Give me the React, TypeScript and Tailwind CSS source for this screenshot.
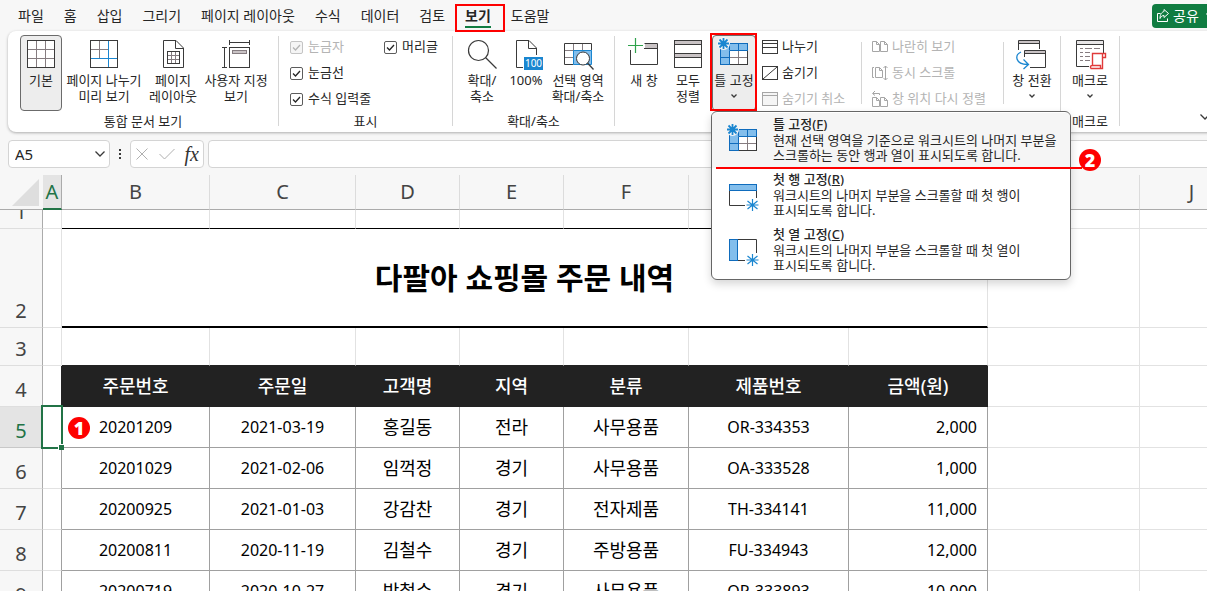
import type { ReactNode } from 'react';

const tabs = ['파일', '홈', '삽입', '그리기', '페이지 레이아웃', '수식', '데이터', '검토', '보기', '도움말'];

const columns = [
  { name: 'A', width: 'w-[19px]' },
  { name: 'B', width: 'w-[148px]' },
  { name: 'C', width: 'w-[146px]' },
  { name: 'D', width: 'w-[104px]' },
  { name: 'E', width: 'w-[104px]' },
  { name: 'F', width: 'w-[125px]' },
  { name: 'G', width: 'w-[160px]' },
  { name: 'H', width: 'w-[139px]' },
  { name: 'I', width: 'w-[152px]' },
  { name: 'J', width: 'w-[104px]' },
];

const headings = ['주문번호', '주문일', '고객명', '지역', '분류', '제품번호', '금액(원)'];

const orders = [
  { row: 5, id: '20201209', date: '2021-03-19', customer: '홍길동', region: '전라', category: '사무용품', product: 'OR-334353', amount: '2,000' },
  { row: 6, id: '20201029', date: '2021-02-06', customer: '임꺽정', region: '경기', category: '사무용품', product: 'OA-333528', amount: '1,000' },
  { row: 7, id: '20200925', date: '2021-01-03', customer: '강감찬', region: '경기', category: '전자제품', product: 'TH-334141', amount: '11,000' },
  { row: 8, id: '20200811', date: '2020-11-19', customer: '김철수', region: '경기', category: '주방용품', product: 'FU-334943', amount: '12,000' },
  { row: 9, id: '20200719', date: '2020-10-27', customer: '박철수', region: '경기', category: '사무용품', product: 'OR-333893', amount: '10,000' },
];

const DARK = '#3a3a3a';
const GRAY = '#857c80';
const FILL = '#c9c3c5';
const BLUE = '#1a86d0';
const SKY = '#83beec';

const Icon: React.FC<{ w?: number; h?: number; color?: string; children: ReactNode }> = ({
  w = 28,
  h = 28,
  color = DARK,
  children,
}) => (
  <svg
    width={w}
    height={h}
    viewBox={`0 0 ${w} ${h}`}
    fill="none"
    stroke={color}
    className="shrink-0 overflow-visible"
    aria-hidden="true"
  >
    {children}
  </svg>
);

const Chevron: React.FC<{ w?: number; color?: string }> = ({ w = 6, color }) => (
  <Icon w={w} h={w / 2 + 1} color={color}>
    <path d={`M.5 .5L${w / 2} ${w / 2}L${w - 0.5} .5`} strokeWidth="1.3" />
  </Icon>
);

const NormalIcon = () => (
  <Icon>
    <rect x=".5" y=".5" width="27" height="27" fill="#fff" />
    <path d="M9.5 1V27M18.5 1V27M1 9.5H27M1 18.5H27" stroke={GRAY} />
  </Icon>
);

const PageBreakIcon = () => (
  <Icon>
    <path d="M9.5 1V18M1 9.5H18" stroke={GRAY} />
    <rect x=".5" y=".5" width="27" height="27" />
    <path d="M18.5 1V27M1 18.5H27" stroke={BLUE} />
  </Icon>
);

const PageLayoutIcon = () => (
  <Icon w={21}>
    <path d="M.5 .5H13L20.5 8V27.5H.5Z" />
    <path d="M12.5 .5V8.5H20.5" />
    <path d="M8.5 11.5V23.5M12.5 11.5V23.5M4.5 15.5H16.5M4.5 19.5H16.5" stroke={GRAY} />
    <rect x="4.5" y="11.5" width="12" height="12" />
  </Icon>
);

const CustomViewIcon = () => (
  <Icon>
    <path d="M7.5 0V5M27.5 0V5M7.5 2.5H27.5M0 7.5H5M0 27.5H5M2.5 7.5V27.5" />
    <rect x="7.5" y="7.5" width="20" height="20" />
    <rect x="10.5" y="10.5" width="14" height="3" fill={FILL} stroke={GRAY} />
  </Icon>
);

const ZoomIcon = () => (
  <Icon>
    <circle cx="10.5" cy="10.5" r="10" strokeWidth="1.2" />
    <path d="M17.5 17.5L28.5 28.5" strokeWidth="1.3" />
  </Icon>
);

const HundredIcon = () => (
  <Icon w={21}>
    <path d="M.5 27.5V.5H13L20.5 8V15M.5 27.5H7" />
    <path d="M12.5 .5V8.5H20.5" />
    <rect x="8" y="17" width="19" height="13" fill={BLUE} stroke="none" />
    <text x="17.5" y="27" textAnchor="middle" fontSize="10" fill="#fff" stroke="none">
      100
    </text>
  </Icon>
);

const ZoomSelectionIcon = () => (
  <Icon>
    <path d="M9.5 4V24M18.5 4V10M1 10.5H10M1 17.5H10" stroke={GRAY} />
    <rect x="10" y="10" width="18" height="14" fill={SKY} stroke="none" />
    <path d="M27.5 10V3.5H.5V24.5H9.5" />
    <path d="M9.5 24.5V10.5H27.5V24.5H9.5" stroke={BLUE} />
    <circle cx="19" cy="18.5" r="6.5" fill="#fff" />
    <path d="M23.5 23L29.5 29.5" strokeWidth="1.3" />
  </Icon>
);

const NewWindowIcon = () => (
  <Icon>
    <rect x="15" y="4" width="12" height="4" fill={FILL} stroke="none" />
    <path d="M.5 10V24.5H27.5V3.5H14.5M14 8.5H27" />
    <path d="M5.5 -2V13M-2 5.5H13" stroke="#2fa24c" strokeWidth="1.2" />
  </Icon>
);

const ArrangeIcon = () => (
  <Icon>
    <rect x=".5" y=".5" width="27" height="4" fill={FILL} />
    <rect x=".5" y="13.5" width="27" height="4" fill={FILL} />
    <rect x=".5" y=".5" width="27" height="27" />
  </Icon>
);

const Star: React.FC<{ x: number; y: number }> = ({ x, y }) => (
  <path
    transform={`translate(${x} ${y})`}
    d="M0 -6V6M-6 0H6M-5 -4L5 4M-5 4L5 -4"
    stroke={BLUE}
    strokeWidth="1.2"
  />
);

const FreezeIcon = () => (
  <Icon>
    <rect x=".5" y="3.5" width="27" height="21" fill="#fff" />
    <path d="M1 3.5H27.5V10.5H9.5V24.5H.5V3.5" fill={SKY} stroke="#0f6cbd" />
    <path d="M9.5 4V10M18.5 4V10M1 17.5H9" stroke="#0f6cbd" />
    <path d="M18.5 11V24M10 17.5H27" stroke={GRAY} />
    <path d="M10 24.5H27.5V11" />
    <circle cx="3.5" cy="3.5" r="6.5" fill="#f5f5f5" stroke="none" />
    <path
      d="M3.5 -2V9M-2 3.5H9M-.5 -.5L7.5 7.5M7.5 -.5L-.5 7.5"
      stroke={BLUE}
      strokeWidth="1.8"
    />
  </Icon>
);

const FreezeRowIcon = () => (
  <Icon>
    <path d="M.5 9V24.5H16M27.5 9V17" />
    <rect x=".5" y="3.5" width="27" height="6" fill={SKY} stroke="#0f6cbd" />
    <Star x={23.5} y={24} />
  </Icon>
);

const FreezeColumnIcon = () => (
  <Icon>
    <path d="M9 3.5H27.5V17M9 24.5H16" />
    <rect x=".5" y="3.5" width="8" height="21" fill={SKY} stroke="#0f6cbd" />
    <Star x={23.5} y={24} />
  </Icon>
);

const SwitchIcon = () => (
  <Icon>
    <rect x="1" y="1" width="20" height="2.5" fill={FILL} stroke="none" />
    <rect x="7" y="11" width="20" height="2.5" fill={FILL} stroke="none" />
    <path d="M.5 10V.5H21.5V9M1 3.5H21" />
    <path d="M6.5 17V10.5H27.5V27.5H12M7 13.5H27" />
    <path d="M3 12C-3.5 15 -3 24 9.5 24.5M5.5 19.5L10.5 24.5L5.5 29" stroke={BLUE} strokeWidth="1.3" />
  </Icon>
);

const MacroIcon = () => (
  <Icon>
    <rect x="1" y="1" width="26" height="3.5" fill="#e8e6e7" stroke="none" />
    <path d="M13 26.5H.5V.5H27.5V13M1 4.5H27" />
    <path d="M4 8.5H7M9 8.5H16M18 8.5H24M4 12.5H7M9 12.5H14M4 16.5H7M9 16.5H14M4 20.5H7M9 20.5H14" stroke={GRAY} />
    <path d="M16.5 26V13.5H29.5V17.5H26.5M26.5 13.5V28.5H15Q13.5 26 16 25.5H24.5V28.5" stroke="#e03a3a" strokeWidth="1.4" />
  </Icon>
);

const SplitIcon = () => (
  <Icon w={16} h={14}>
    <rect x=".5" y=".5" width="15" height="13" />
    <path d="M1 3.5H15M1 7.5H15" />
  </Icon>
);

const HideIcon = () => (
  <Icon w={16} h={14}>
    <rect x=".5" y=".5" width="15" height="13" />
    <path d="M1 13L15 1" />
  </Icon>
);

const UnhideIcon = () => (
  <Icon w={16} h={14} color="#a6a6a6">
    <rect x=".5" y=".5" width="15" height="13" fill="#f5f5f5" />
    <path d="M1 3.5H15" />
  </Icon>
);

const SideBySideIcon = () => (
  <Icon w={16} h={14} color="#a6a6a6">
    <path d="M.5 1.5H4.5L7.5 4.5V11.5H.5ZM4.5 1.5V4.5H7.5M8.5 1.5H12.5L15.5 4.5V11.5H8.5ZM12.5 1.5V4.5H15.5" />
  </Icon>
);

const SyncScrollIcon = () => (
  <Icon w={16} h={14} color="#a6a6a6">
    <path d="M2 1.5H.5V11.5H2M3.5 1.5H7.5L10.5 4.5V11.5H3.5ZM7.5 1.5V4.5H10.5M13.5 0V14M11.5 2L13.5 0L15.5 2M11.5 12L13.5 14L15.5 12" />
  </Icon>
);

const ResetPositionIcon = () => (
  <Icon w={16} h={14} color="#a6a6a6">
    <path d="M.5 5.5H4.5L7.5 8.5V14.5H.5ZM4.5 5.5V8.5H7.5M8.5 5.5H12.5L15.5 8.5V14.5H8.5ZM12.5 5.5V8.5H15.5M7.5 3V1.5H1M3 -1L.5 1.5L3 3.5" />
  </Icon>
);

const RibbonButton: React.FC<{
  icon: ReactNode;
  lines: string[];
  width: string;
  active?: boolean;
  arrow?: boolean;
}> = ({ icon, lines, width, active, arrow }) => (
  <button
    className={`flex h-[76px] shrink-0 flex-col items-center rounded border pt-1 ${width} ${
      active ? 'border-[#6b6b6b] bg-[#ededed]' : 'border-transparent'
    }`}
  >
    {icon}
    <span className="mt-1 flex flex-col items-center leading-4 whitespace-nowrap">
      {lines.map((line) => (
        <span key={line}>{line}</span>
      ))}
    </span>
    {arrow && (
      <span className="mt-1.5">
        <Chevron />
      </span>
    )}
  </button>
);

const SmallButton: React.FC<{ icon: ReactNode; label: string; disabled?: boolean }> = ({
  icon,
  label,
  disabled,
}) => (
  <button
    disabled={disabled}
    className="flex h-6 items-center gap-1 whitespace-nowrap disabled:text-[#b4b4b4]"
  >
    {icon}
    {label}
  </button>
);

const CheckItem: React.FC<{ id: string; label: string; disabled?: boolean }> = ({
  id,
  label,
  disabled,
}) => (
  <div className={`flex h-6 items-center gap-[5px] whitespace-nowrap ${disabled ? 'text-[#b4b4b4]' : ''}`}>
    <span className="relative flex">
      <input
        type="checkbox"
        id={id}
        defaultChecked
        disabled={disabled}
        className="size-[13px] appearance-none rounded-xs border border-[#5c5c5c] bg-white disabled:border-[#c4c4c4] disabled:bg-[#f5f5f5]"
      />
      <svg viewBox="0 0 13 13" fill="none" stroke="currentColor" strokeWidth="1.3" className="pointer-events-none absolute inset-0">
        <path d="M3 6.5L5.5 9L10 4" />
      </svg>
    </span>
    <label htmlFor={id}>{label}</label>
  </div>
);

const Group: React.FC<{ label?: string; className: string; children: ReactNode }> = ({
  label,
  className,
  children,
}) => (
  <section className="flex shrink-0 flex-col gap-[2px]">
    <div className={`flex ${className}`}>{children}</div>
    <div className="h-4 text-center leading-4 whitespace-nowrap">{label}</div>
  </section>
);

const Divider = () => <div className="mt-px h-[90px] w-px shrink-0 bg-[#d6d6d6]" />;
const ShortDivider = () => <div className="mt-[7px] h-[62px] w-px shrink-0 bg-[#d6d6d6]" />;

const Badge: React.FC<{ n: number }> = ({ n }) => (
  <span className="flex size-[22px] items-center justify-center rounded-full bg-[#fe0000] font-['Open_Sans','Noto_Sans',sans-serif] text-lg leading-none font-extrabold text-white">
    {n}
  </span>
);

const menuItems = [
  { icon: <FreezeIcon />, name: '틀 고정', hotkey: 'F', text: ['현재 선택 영역을 기준으로 워크시트의 나머지 부분을', '스크롤하는 동안 행과 열이 표시되도록 합니다.'] },
  { icon: <FreezeRowIcon />, name: '첫 행 고정', hotkey: 'R', text: ['워크시트의 나머지 부분을 스크롤할 때 첫 행이', '표시되도록 합니다.'] },
  { icon: <FreezeColumnIcon />, name: '첫 열 고정', hotkey: 'C', text: ['워크시트의 나머지 부분을 스크롤할 때 첫 열이', '표시되도록 합니다.'] },
];

const FreezeMenu = () => (
  <div className="absolute top-full -left-px z-20 w-[360px] rounded-md border border-[#666] bg-white py-px shadow-[0_4px_8px_rgba(0,0,0,0.16)]">
    {menuItems.map((item, i) => (
      <button
        key={item.hotkey}
        className={`flex h-[55px] w-full gap-4 rounded-t pt-[3px] pl-[17px] text-left ${i === 0 ? 'bg-[#f5f5f5]' : ''}`}
      >
        <span className="pt-[10px]">{item.icon}</span>
        <span className="flex flex-col whitespace-nowrap">
          <span className="mb-px leading-4 font-medium">
            {item.name}(<u>{item.hotkey}</u>)
          </span>
          {item.text.map((line) => (
            <span key={line} className="leading-[15px]">
              {line}
            </span>
          ))}
        </span>
      </button>
    ))}
    <div className="absolute top-[55px] -right-3 left-1 h-[2px] bg-[#fe0000]" />
    <div className="absolute top-[37px] -right-[31px]">
      <Badge n={2} />
    </div>
  </div>
);

const Tabs = () => (
  <nav className="flex h-[31px] items-center gap-5 pl-[18px] text-sm whitespace-nowrap">
    {tabs.map((tab) =>
      tab === '보기' ? (
        <button key={tab} className="relative font-bold">
          {tab}
          <span className="absolute inset-x-0 -bottom-[2px] h-[2px] bg-[#107c41]" />
          <span className="absolute -top-[2px] -right-[14px] -bottom-[6px] -left-[10px] z-20 border-2 border-[#fe0000]" />
        </button>
      ) : (
        <button key={tab}>{tab}</button>
      )
    )}
    <button className="-mr-5 ml-auto flex h-6 w-[75px] items-center gap-1 rounded bg-[#107c41] pl-[5px] text-white">
      <Icon w={12} h={13} color="#fff">
        <path d="M3.5 4.5H.5V12.5H10.5V9.5M7 .5L11.5 4.5L7 8.5V6.5C5 6.5 4 7.5 3 9.5C3 5 5 3 7 2.5Z" />
      </Icon>
      공유
      <span className="ml-[3px]">
        <Chevron w={7} color="#fff" />
      </span>
    </button>
  </nav>
);

const Ribbon = () => (
  <div className="relative z-10 -mr-4 ml-2 flex h-[101px] rounded-lg bg-white pt-1 text-[13px] shadow-[0_1px_3px_rgba(0,0,0,0.3)]">
    <Group label="통합 문서 보기" className="gap-1 pr-[10px] pl-3">
      <RibbonButton icon={<NormalIcon />} lines={['기본']} width="w-[42px]" active />
      <RibbonButton icon={<PageBreakIcon />} lines={['페이지 나누기', '미리 보기']} width="w-[76px]" />
      <RibbonButton icon={<PageLayoutIcon />} lines={['페이지', '레이아웃']} width="w-[54px]" />
      <RibbonButton icon={<CustomViewIcon />} lines={['사용자 지정', '보기']} width="w-16" />
    </Group>
    <Divider />
    <Group label="표시" className="w-[173px] pl-[11px]">
      <div className="grid h-[76px] grid-cols-[94px_auto] content-start gap-y-[2px]">
        <CheckItem id="ruler" label="눈금자" disabled />
        <CheckItem id="headings" label="머리글" />
        <div className="col-span-2">
          <CheckItem id="gridlines" label="눈금선" />
        </div>
        <div className="col-span-2">
          <CheckItem id="formulaBar" label="수식 입력줄" />
        </div>
      </div>
    </Group>
    <Divider />
    <Group label="확대/축소" className="gap-1 pr-[10px] pl-[11px]">
      <RibbonButton icon={<ZoomIcon />} lines={['확대/', '축소']} width="w-9" />
      <RibbonButton icon={<HundredIcon />} lines={['100%']} width="w-11" />
      <RibbonButton icon={<ZoomSelectionIcon />} lines={['선택 영역', '확대/축소']} width="w-[52px]" />
    </Group>
    <Divider />
    <Group className="pl-[9px]">
      <div className="flex gap-1">
        <RibbonButton icon={<NewWindowIcon />} lines={['새 창']} width="w-10" />
        <RibbonButton icon={<ArrangeIcon />} lines={['모두', '정렬']} width="w-10" />
        <div className="relative">
          <RibbonButton icon={<FreezeIcon />} lines={['틀 고정']} width="w-11" active arrow />
          <span className="absolute -top-[2px] -right-px bottom-0 -left-[2px] border-2 border-[#fe0000]" />
          <FreezeMenu />
        </div>
      </div>
      <div className="flex w-[105px] flex-col gap-[2px] pl-[6px]">
        <SmallButton icon={<SplitIcon />} label="나누기" />
        <SmallButton icon={<HideIcon />} label="숨기기" />
        <SmallButton icon={<UnhideIcon />} label="숨기기 취소" disabled />
      </div>
      <ShortDivider />
      <div className="flex w-[141px] flex-col gap-[2px] pl-[10px]">
        <SmallButton icon={<SideBySideIcon />} label="나란히 보기" disabled />
        <SmallButton icon={<SyncScrollIcon />} label="동시 스크롤" disabled />
        <SmallButton icon={<ResetPositionIcon />} label="창 위치 다시 정렬" disabled />
      </div>
      <ShortDivider />
      <div className="px-1">
        <RibbonButton icon={<SwitchIcon />} lines={['창 전환']} width="w-12" arrow />
      </div>
    </Group>
    <Divider />
    <Group label="매크로" className="px-[5px]">
      <RibbonButton icon={<MacroIcon />} lines={['매크로']} width="w-12" arrow />
    </Group>
    <Divider />
    <button className="mt-auto mr-[13px] mb-3 ml-auto" aria-label="collapse">
      <Chevron w={10} />
    </button>
  </div>
);

const FormulaBar = () => (
  <div className="mt-2 flex h-7 pl-2">
    <div className="flex w-[102px] items-center rounded border border-[#d4d4d4] bg-white pr-1">
      <input
        aria-label="name box"
        defaultValue="A5"
        className="w-0 flex-1 pl-1.5 text-[15px] outline-none"
      />
      <Chevron w={10} />
    </div>
    <div className="flex w-5 items-center justify-center">
      <Icon w={2} h={12}>
        <path d="M1 1V3M1 5V7M1 9V11" strokeWidth="2" />
      </Icon>
    </div>
    <div className="flex w-[74px] items-center justify-between rounded border border-[#d4d4d4] bg-white px-1">
      <Icon w={14} h={12} color="#b0b0b0">
        <path d="M1.5 .5L12.5 11.5M12.5 .5L1.5 11.5" />
      </Icon>
      <Icon w={16} h={12} color="#b0b0b0">
        <path d="M.5 6L5.5 11L15.5 1" />
      </Icon>
      <span className="font-['Liberation_Serif',serif] text-xl leading-none text-[#333] italic">fx</span>
    </div>
    <input
      aria-label="formula"
      className="-mr-2 ml-1 min-w-0 flex-1 rounded border border-[#d4d4d4] bg-white px-2 outline-none"
    />
  </div>
);

const RowHead: React.FC<{ n: number; height: string; active?: boolean }> = ({ n, height, active }) => (
  <th
    className={`border-r border-b border-r-[#ababab] p-0 font-normal ${
      active ? 'border-b-[#c8c8c8] bg-[#e4e4e4] text-[#217346]' : 'border-b-[#dedede] bg-[#f7f7f7] text-[#444]'
    }`}
  >
    <div className={`flex items-end justify-center overflow-hidden pb-[2px] text-xl leading-7 ${height}`}>{n}</div>
  </th>
);

const grid = 'border-r border-b border-[#e2e2e2]';
const cell = 'border-r border-b border-[#a0a0a0] p-0 text-center';

const Sheet = () => (
  <div className="mt-[7px] min-h-0 flex-1 overflow-hidden bg-white">
    <table className="w-[1244px] table-fixed border-separate border-spacing-0 text-black">
      <colgroup>
        <col className="w-[43px]" />
        {columns.map((c) => (
          <col key={c.name} className={c.width} />
        ))}
      </colgroup>
      <thead>
        <tr className="h-[35px] bg-[#f7f7f7]">
          <th className="border-b border-[#ababab] p-0">
            <svg width="27" height="27" className="ml-3" aria-hidden="true">
              <path d="M27 0V27H0Z" fill="#dedede" />
            </svg>
          </th>
          {columns.map((c) => (
            <th
              key={c.name}
              className={`border-r p-0 text-xl font-normal ${
                c.name === 'A'
                  ? 'border-b-2 border-r-[#ababab] border-b-[#217346] bg-[#e4e4e4] text-[#217346]'
                  : 'border-b border-r-[#dcdcdc] border-b-[#ababab] text-[#444]'
              }`}
            >
              {c.name}
            </th>
          ))}
        </tr>
      </thead>
      <tbody>
        <tr>
          <RowHead n={1} height="h-[18px]" />
          {columns.map((c) => (
            <td
              key={c.name}
              className={`border-r border-b border-r-[#e2e2e2] ${
                'BCDEFGH'.includes(c.name) ? 'border-b-black' : 'border-b-[#e2e2e2]'
              }`}
            />
          ))}
        </tr>
        <tr>
          <RowHead n={2} height="h-[98px]" />
          <td className={grid} />
          <td
            colSpan={7}
            className="border-r border-b-2 border-r-[#e2e2e2] border-b-black p-0 text-center text-3xl font-bold"
          >
            다팔아 쇼핑몰 주문 내역
          </td>
          <td className={grid} />
          <td className={grid} />
        </tr>
        <tr>
          <RowHead n={3} height="h-[37px]" />
          {columns.map((c) => (
            <td
              key={c.name}
              className={`border-r border-b border-r-[#e2e2e2] ${
                'BCDEFGH'.includes(c.name) ? 'border-b-[#222]' : 'border-b-[#e2e2e2]'
              }`}
            />
          ))}
        </tr>
        <tr>
          <RowHead n={4} height="h-[40px]" />
          <td className="border-r border-b border-r-[#222] border-b-[#e2e2e2]" />
          {headings.map((h) => (
            <th key={h} className="border-r border-b border-[#222] bg-[#222] p-0 text-lg font-medium text-white">
              {h}
            </th>
          ))}
          <td className={grid} />
          <td className={grid} />
        </tr>
        {orders.map((o) => (
          <tr key={o.row}>
            <RowHead n={o.row} height="h-[40px]" active={o.row === 5} />
            <td className="relative border-r border-b border-r-[#a0a0a0] border-b-[#e2e2e2]">
              {o.row === 5 && (
                <>
                  <div className="absolute -inset-[2px] z-[1] border-2 border-[#217346]" />
                  <div className="absolute -right-[3px] -bottom-[3px] z-[1] size-[6px] border-t border-l border-white bg-[#217346]" />
                </>
              )}
            </td>
            <td className={`${cell} relative`}>
              {o.id}
              {o.row === 5 && (
                <div className="absolute top-[10px] left-1.5">
                  <Badge n={1} />
                </div>
              )}
            </td>
            <td className={cell}>{o.date}</td>
            <td className={`${cell} text-lg`}>{o.customer}</td>
            <td className={`${cell} text-lg`}>{o.region}</td>
            <td className={`${cell} text-lg`}>{o.category}</td>
            <td className={cell}>{o.product}</td>
            <td className="border-r border-b border-[#a0a0a0] py-0 pr-[10px] text-right">{o.amount}</td>
            <td className={grid} />
            <td className={grid} />
          </tr>
        ))}
      </tbody>
    </table>
  </div>
);

const App = () => {
  return (
    <div className="flex h-screen flex-col overflow-hidden bg-[#f7f7f7] font-['Noto_Sans','Noto_Sans_CJK_KR',sans-serif] text-[#262626]">
      <Tabs />
      <Ribbon />
      <FormulaBar />
      <Sheet />
    </div>
  );
};

export default App;
